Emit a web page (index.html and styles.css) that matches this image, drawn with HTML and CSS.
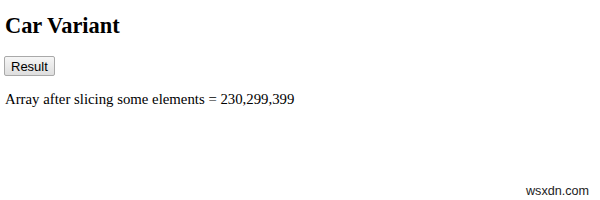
FILE: index.html
```html
<!DOCTYPE html>
<html lang="en">

<head>
    <meta charset="UTF-8">
    <title>Car Variant</title>
    <link rel="stylesheet" href="styles.css">
</head>

<body>
    <h2>Car Variant</h2>
    <button class="result-btn" onclick="show()">Result</button>
    <p id="demo" class="output">Array after slicing some elements = 230,299,399</p>
    <div class="watermark">wsxdn.com</div>

    <script>
        function show() {
            var cars = [230, 299, 399, 450];
            document.getElementById("demo").innerHTML = "Array after slicing some elements = " + cars.slice(0, 3);
        }
    </script>
</body>

</html>
```

FILE: styles.css
```css
html,
body {
    height: 100%;
}

body {
    margin: 0;
    padding: 0 5px;
    font-family: "Liberation Serif", "Times New Roman", serif;
    background-color: #fff;
    color: #000;
    position: relative;
}

h2 {
    font-size: 22.4px;
    line-height: 26px;
    margin: 13px 0 17px 0;
}

.result-btn {
    font-family: "Liberation Sans", Arial, sans-serif;
    font-size: 13px;
    height: 20px;
    padding: 0 6px;
    margin-left: -1px;
    color: #000;
    background: linear-gradient(#f6f6f6, #dedede);
    border: 1px solid #a9a9a9;
    border-radius: 2px;
}

.output {
    font-size: 14.8px;
    line-height: 18px;
    margin: 14px 0 0 0;
}

.watermark {
    position: absolute;
    right: 11px;
    bottom: 2px;
    font-family: "Liberation Sans", Arial, sans-serif;
    font-size: 12.6px;
    color: #222;
}
```
